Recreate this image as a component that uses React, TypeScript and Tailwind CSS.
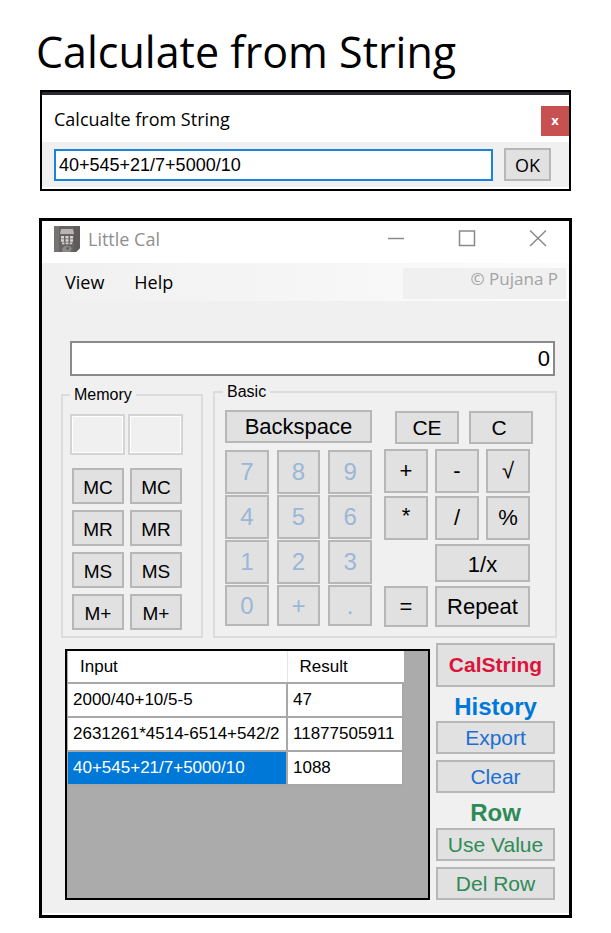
import type { ReactNode } from "react";

const sans = "font-['Liberation_Sans',Arial,sans-serif]";
const ui = "font-['Open_Sans','Segoe_UI',sans-serif]";

function Btn({ children, className = "", label, disabled = false }: { children: ReactNode; className?: string; label?: string; disabled?: boolean }) {
  return (
    <button
      type="button"
      aria-label={label}
      disabled={disabled}
      className={`flex items-center justify-center whitespace-nowrap border-2 border-[#b7b7b7] bg-[#e1e1e1] leading-6 ${className}`}
    >
      {children}
    </button>
  );
}

function CalculatorIcon() {
  return (
    <svg viewBox="0 0 26 26" className="h-[26px] w-[26px] shrink-0" aria-hidden="true">
      <path d="M0 0h26v22l-4 4H0z" fill="#686464" />
      <path d="M0 0h5v26H0z" fill="#777373" />
      <path d="M20 0h6v22l-4 4h-2z" fill="#5f5b5b" />
      <path d="M7 3h12l1 5H6z" fill="#b9b5b5" />
      <path d="M7 10h3v2.500H7zm4.500 0h3v2.500h-3zm4.500 0h3v2.500h-3zM7 13.300h3v2.500H7zm4.500 0h3v2.500h-3zm4.500 0h3v2.500h-3zM8 16.500h2.500v1.700H8zm3.700 0h2.800v1.700h-2.800zm4 0h2.500v1.700h-2.500z" fill="#d6d3d3" />
      <path d="M8 24c1-4 3-5 7-4l3 2-2 4H9z" fill="#8d8989" />
      <path d="M12 22l3-1-1 3z" fill="#4b4848" />
    </svg>
  );
}

function StringDialog() {
  return (
    <section className="border-2 border-black bg-[#f0f0f0]">
      <div className="h-[3px] bg-[#2b2b33]" />
      <header className={`flex h-[47px] items-center justify-between bg-white pl-3 ${ui}`}>
        <h2 className="text-lg leading-6">Calcualte from String</h2>
        <button type="button" aria-label="Close dialog" className="mt-1 flex h-[30px] w-7 items-center justify-center bg-[#c75050] pb-0.5 text-[13px] font-bold leading-5 text-white">
          x
        </button>
      </header>
      <div className="flex items-end gap-[11px] border-b-2 border-white pb-1.5 pl-3 pr-[18px] pt-1.5">
        <input
          aria-label="Expression"
          defaultValue="40+545+21/7+5000/10"
          className="h-8 min-w-0 flex-1 border-2 border-[#1a84dc] bg-white px-[3px] text-lg outline-none"
        />
        <Btn className={`h-[33px] w-[47px] text-lg ${ui}`}>OK</Btn>
      </div>
    </section>
  );
}

function TitleBar() {
  return (
    <header className={`flex h-[42px] items-start justify-between bg-white pl-3 pr-[22px] pt-1 ${ui}`}>
      <div className="flex items-center gap-2 text-[#8f8f8f]">
        <CalculatorIcon />
        <h2 className="text-lg leading-7">Little Cal</h2>
      </div>
      <div className="flex gap-[53px] pt-1 text-[#8a8a8a]">
        <button type="button" aria-label="Minimize" className="h-[18px] w-[18px]">
          <svg viewBox="0 0 18 18" fill="none" stroke="currentColor" strokeWidth="1.500"><path d="M1 9.500h16" /></svg>
        </button>
        <button type="button" aria-label="Maximize" className="h-[18px] w-[18px]">
          <svg viewBox="0 0 18 18" fill="none" stroke="currentColor" strokeWidth="1.500"><path d="M1.500 2h15v14.500h-15z" /></svg>
        </button>
        <button type="button" aria-label="Close" className="h-[18px] w-[18px]">
          <svg viewBox="0 0 18 18" fill="none" stroke="currentColor" strokeWidth="1.500"><path d="M1 1.500l16 15.500M17 1.500L1 17" /></svg>
        </button>
      </div>
    </header>
  );
}

function MenuBar() {
  return (
    <nav className={`flex h-[38px] items-start justify-between bg-linear-to-r from-[#f0f0f0] to-[#fcfcfc] pl-[23px] pr-[3px] pt-[5px] text-lg ${ui}`}>
      <div className="flex gap-[30px] leading-7">
        <button type="button">View</button>
        <button type="button">Help</button>
      </div>
      <p className="h-[31px] w-[163px] bg-[#f0f0f0] pr-2 text-right text-[17px] leading-[22px] text-[#a3a3a3]">© Pujana P</p>
    </nav>
  );
}

const memoryKeys = ["MC", "MR", "MS", "M+"];

function MemoryGroup() {
  return (
    <fieldset className="mt-[3px] w-[142px] shrink-0 border-2 border-[#dcdcdc] px-[7px] pb-1.5">
      <legend className="px-1 text-base leading-4">Memory</legend>
      <div className="flex gap-[3px] pt-[11px]">
        <div className="h-[41px] w-[55px] border-2 border-[#d4d4d4]"><div className="h-full border border-white" /></div>
        <div className="h-[41px] w-[55px] border-2 border-[#d4d4d4]"><div className="h-full border border-white" /></div>
      </div>
      <div className="grid grid-cols-[52px_52px] gap-1.5 pl-0.5 pt-[13px]">
        {memoryKeys.map((key) =>
          [1, 2].map((slot) => (
            <Btn key={key + slot} label={`${key} ${slot}`} className="h-9 pt-1 text-[19px]">{key}</Btn>
          )),
        )}
      </div>
    </fieldset>
  );
}

const digits = ["7", "8", "9", "4", "5", "6", "1", "2", "3"];

function BasicGroup() {
  return (
    <fieldset className="min-w-0 flex-1 border-2 border-[#dcdcdc] pb-1.5 pl-2.5">
      <legend className="-ml-0.5 px-1 text-base leading-4">Basic</legend>
      <div className="flex gap-3 pt-2.5">
        <div className="w-[147px]">
          <Btn className="h-[33px] w-full text-[22px]">Backspace</Btn>
          <div className="mt-[7px] grid grid-cols-3 gap-x-2 gap-y-px text-2xl text-[#9ab7d6]">
            {digits.map((d) => (
              <Btn key={d} disabled className="h-11">{d}</Btn>
            ))}
            <Btn disabled className="h-[41px]">0</Btn>
            <Btn disabled className="h-[41px]">+</Btn>
            <Btn disabled className="h-[41px]">.</Btn>
          </div>
        </div>
        <div className="pt-px">
          <div className="flex gap-2.5 pl-[11px] text-[21px]">
            <Btn className="h-[33px] w-16">CE</Btn>
            <Btn className="h-[33px] w-16 pr-1">C</Btn>
          </div>
          <div className="mt-[5px] grid grid-cols-[44px_44px_44px] gap-x-[7px] gap-y-[3px] text-[22px]">
            <Btn className="h-11">+</Btn>
            <Btn className="h-11">-</Btn>
            <Btn className="h-11">√</Btn>
            <Btn className="h-11 pb-1">*</Btn>
            <Btn className="h-11">/</Btn>
            <Btn className="h-11">%</Btn>
            <Btn className="col-span-2 col-start-2 my-px h-[38px] pt-1">1/x</Btn>
            <Btn className="h-[41px]">=</Btn>
            <Btn className="col-span-2 h-[41px]">Repeat</Btn>
          </div>
        </div>
      </div>
    </fieldset>
  );
}

const history = [
  { input: "2000/40+10/5-5", result: "47", selected: false },
  { input: "2631261*4514-6514+542/2", result: "11877505911", selected: false },
  { input: "40+545+21/7+5000/10", result: "1088", selected: true },
];

function HistoryTable() {
  return (
    <div className="mt-1.5 h-[251px] min-w-0 flex-1 border-2 border-black bg-[#ababab] pl-px">
      <table className="w-[336px] table-fixed border-collapse whitespace-nowrap bg-white text-left text-[17px] leading-6">
        <thead>
          <tr className="h-8">
            <th className="w-[219px] border-b-2 border-r border-b-[#a8a8a8] border-r-[#e5e5e5] pl-3 font-normal">Input</th>
            <th className="border-b-2 border-b-[#a8a8a8] pl-3 font-normal">Result</th>
          </tr>
        </thead>
        <tbody>
          {history.map((row) => (
            <tr key={row.input} className="h-[34px]">
              <td className={`border-b-2 border-r-2 border-[#a8a8a8] pl-[5px] ${row.selected ? "bg-[#0078d7] text-white" : ""}`}>{row.input}</td>
              <td className="border-b-2 border-r-2 border-[#a8a8a8] pl-[5px]">{row.result}</td>
            </tr>
          ))}
        </tbody>
      </table>
    </div>
  );
}

function SideActions() {
  return (
    <div className="flex w-[119px] shrink-0 flex-col text-[21px]">
      <Btn className="h-11 font-bold text-[#dc143c]">CalString</Btn>
      <h3 className="pt-1.5 text-center text-2xl font-bold leading-7 text-[#0078d7]">History</h3>
      <Btn className="h-[33px] text-[#1c6fd2]">Export</Btn>
      <Btn className="mt-1.5 h-[33px] text-[#1c6fd2]">Clear</Btn>
      <h3 className="pb-px pt-1.5 text-center text-2xl font-bold leading-7 text-[#2e8b57]">Row</h3>
      <Btn className="h-[33px] text-[#2e8b57]">Use Value</Btn>
      <Btn className="mt-1.5 h-[33px] text-[#2e8b57]">Del Row</Btn>
    </div>
  );
}

export default function App() {
  return (
    <main className={`bg-white px-10 pb-4 pt-6 text-black ${sans}`}>
      <h1 className={`-ml-1 whitespace-nowrap text-[43px] leading-[56px] ${ui}`}>Calculate from String</h1>
      <div className="pt-2.5">
        <StringDialog />
      </div>
      <section className="-mx-px mt-[27px] border-3 border-black bg-[#f0f0f0]">
        <TitleBar />
        <MenuBar />
        <div className="border-b-2 border-white pb-[13px] pt-10">
          <div className="pl-7 pr-3.5">
            <input
              aria-label="Display"
              readOnly
              defaultValue="0"
              className="block h-[35px] w-full border-2 border-[#8a8a8a] bg-white px-[3px] text-right text-[22px] outline-none"
            />
          </div>
          <div className="flex gap-2.5 pl-[19px] pr-3 pt-2">
            <MemoryGroup />
            <BasicGroup />
          </div>
          <div className="flex gap-1.5 pl-[23px] pr-3.5 pt-[5px]">
            <HistoryTable />
            <SideActions />
          </div>
        </div>
      </section>
    </main>
  );
}
